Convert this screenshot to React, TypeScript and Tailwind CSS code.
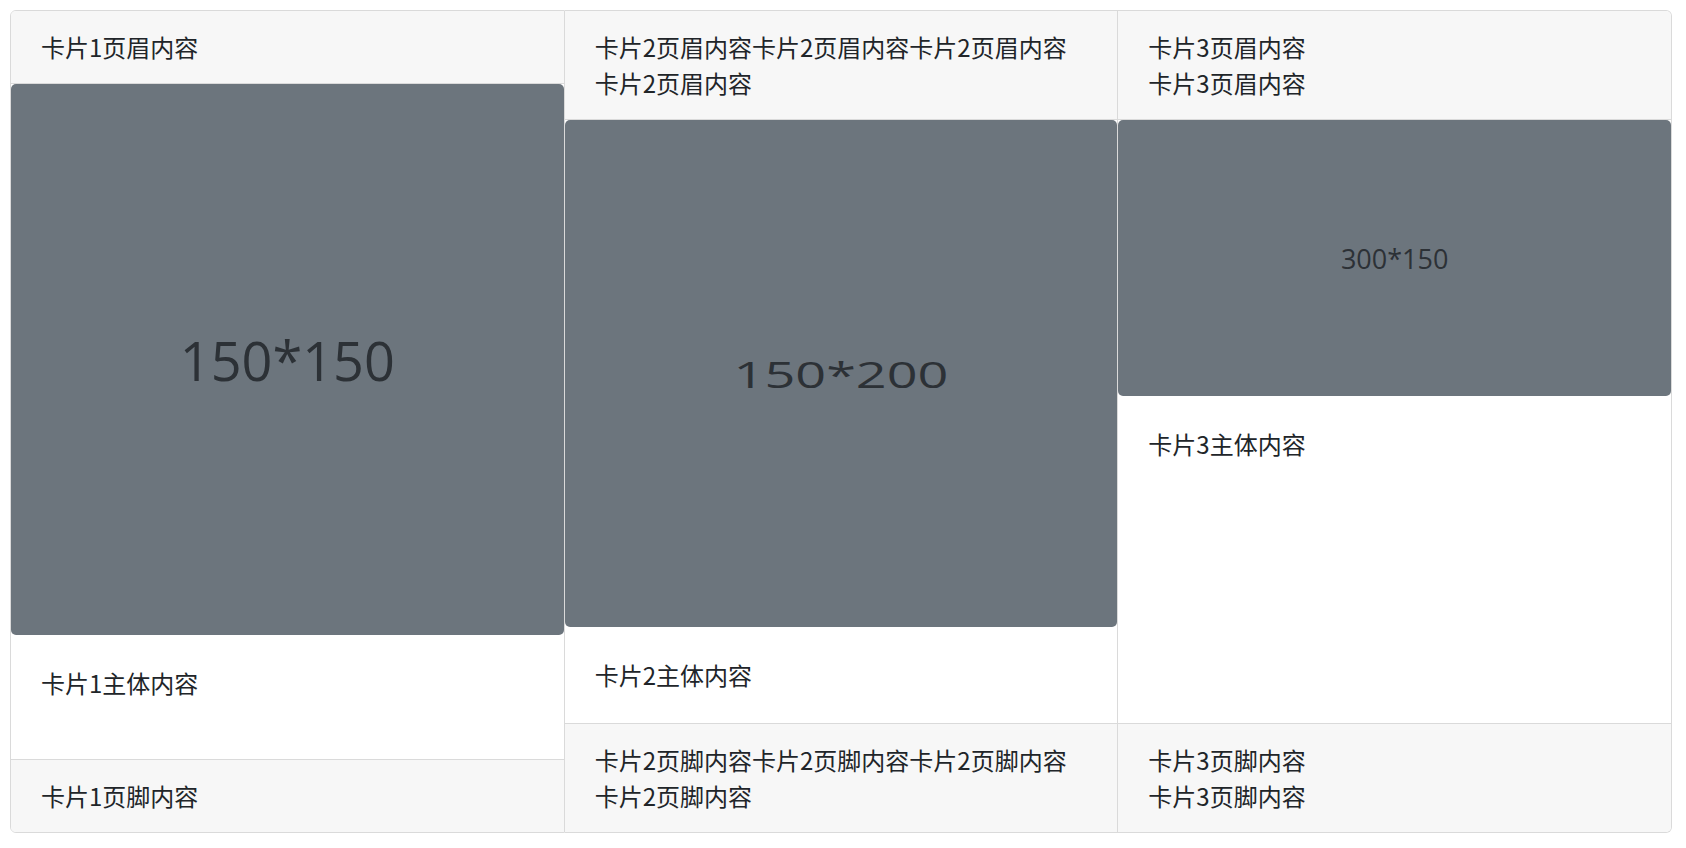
import React from "react";

const font = { fontFamily: '"Noto Sans CJK SC", "Noto Sans", sans-serif' };

function Placeholder({ h, label, size, scaleY }: { h: string; label: string; size: string; scaleY?: string }) {
  return (
    <div className={`${h} w-full bg-[#6c757d] rounded-[5px] flex items-center justify-center shrink-0`}>
      <span
        className={`${size} ${scaleY ?? ""} text-[#2c3136] leading-none`}
        style={{ fontFamily: '"Open Sans", "Noto Sans", sans-serif' }}
      >
        {label}
      </span>
    </div>
  );
}

export default function App() {
  return (
    <div className="pt-[10px] pl-[10px] bg-white min-h-screen" style={font}>
      <div className="flex w-[1662px] text-[24px] leading-[36px] text-[#212529]">
        {/* Card 1 */}
        <div className="flex-1 basis-0 flex flex-col border border-[#dadada] rounded-l-[6px] overflow-hidden">
          <div className="bg-[#f7f7f7] px-[30px] py-[18px] border-b border-[#dadada]">卡片1页眉内容</div>
          <Placeholder h="h-[551px]" label="150*150" size="text-[54px]" />
          <div className="flex-1 p-[30px]">卡片1主体内容</div>
          <div className="bg-[#f7f7f7] px-[30px] py-[18px] border-t border-[#dadada]">卡片1页脚内容</div>
        </div>
        {/* Card 2 */}
        <div className="flex-1 basis-0 flex flex-col border border-l-0 border-[#dadada]">
          <div className="bg-[#f7f7f7] px-[30px] py-[18px] border-b border-[#dadada]">
            卡片2页眉内容卡片2页眉内容卡片2页眉内容
            <br />
            卡片2页眉内容
          </div>
          <Placeholder h="h-[507px]" label="150*200" size="text-[54px]" scaleY="scale-y-[0.69]" />
          <div className="flex-1 p-[30px]">卡片2主体内容</div>
          <div className="bg-[#f7f7f7] px-[30px] py-[18px] border-t border-[#dadada]">
            卡片2页脚内容卡片2页脚内容卡片2页脚内容
            <br />
            卡片2页脚内容
          </div>
        </div>
        {/* Card 3 */}
        <div className="flex-1 basis-0 flex flex-col border border-l-0 border-[#dadada] rounded-r-[6px] overflow-hidden">
          <div className="bg-[#f7f7f7] px-[30px] py-[18px] border-b border-[#dadada]">
            卡片3页眉内容
            <br />
            卡片3页眉内容
          </div>
          <Placeholder h="h-[276px]" label="300*150" size="text-[27px]" />
          <div className="flex-1 p-[30px]">卡片3主体内容</div>
          <div className="bg-[#f7f7f7] px-[30px] py-[18px] border-t border-[#dadada]">
            卡片3页脚内容
            <br />
            卡片3页脚内容
          </div>
        </div>
      </div>
    </div>
  );
}
